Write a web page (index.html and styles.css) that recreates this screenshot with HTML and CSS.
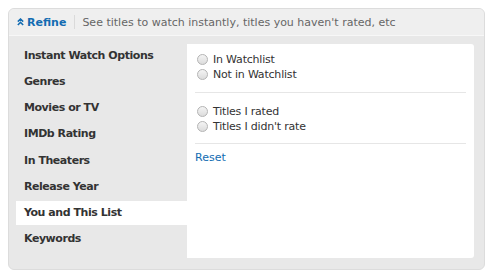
FILE: index.html
```html
<!DOCTYPE html>
<html lang="en">
<head>
    <meta charset="UTF-8">
    <title>Refine</title>
    <link rel="stylesheet" href="styles.css">
</head>
<body>

<div class="refine">
    <div class="refine-head">
        <a class="refine-toggle" href="#">
            <svg class="chev" width="7" height="8" viewBox="0 0 7 8">
                <path d="M0.8 3.6 L3.5 1 L6.2 3.6 M0.8 7 L3.5 4.4 L6.2 7" fill="none" stroke="#136cb2" stroke-width="1.5"/>
            </svg>Refine</a>
        <span class="sep"></span>
        <span class="hint">See titles to watch instantly, titles you haven't rated, etc</span>
    </div>

    <div class="refine-body">
        <ul class="menu">
            <li>Instant Watch Options</li>
            <li>Genres</li>
            <li>Movies or TV</li>
            <li>IMDb Rating</li>
            <li>In Theaters</li>
            <li>Release Year</li>
            <li class="on">You and This List</li>
            <li>Keywords</li>
        </ul>

        <div class="panel">
            <div class="group">
                <label class="opt"><span class="radio"></span>In Watchlist</label>
                <label class="opt"><span class="radio"></span>Not in Watchlist</label>
            </div>
            <div class="group">
                <label class="opt"><span class="radio"></span>Titles I rated</label>
                <label class="opt"><span class="radio"></span>Titles I didn't rate</label>
            </div>
            <a class="reset" href="#">Reset</a>
        </div>
    </div>
</div>

</body>
</html>
```

FILE: styles.css
```css
*{
    margin: 0;
    padding: 0;
}
body{
    background-color: #ffffff;
    font-family: "DejaVu Sans", Verdana, sans-serif;
    font-size: 11px;
    color: #333333;
}
.refine{
    margin: 8px 0 0 8px;
    width: 475px;
    height: 260px;
    border: 1px solid #dcdcdc;
    border-radius: 6px;
    background-color: #e8e8e8;
    overflow: hidden;
}
.refine-head{
    height: 26px;
    display: flex;
    align-items: center;
    background-color: #efefef;
    border-bottom: 1px solid #f7f7f7;
    padding-left: 8px;
}
.refine-toggle{
    display: flex;
    align-items: center;
    color: #136cb2;
    font-weight: bold;
    font-size: 11px;
    text-decoration: none;
}
.chev{
    margin-right: 3px;
}
.sep{
    width: 1px;
    height: 14px;
    background-color: #dadada;
    margin: 0 7px 0 8px;
}
.hint{
    color: #666666;
    font-size: 11px;
}
.refine-body{
    display: flex;
    padding: 8px 10px 0 0;
}
.menu{
    list-style: none;
    width: 171px;
    padding-left: 7px;
}
.menu li{
    height: 24px;
    line-height: 24px;
    padding-left: 8px;
    margin-bottom: 2.15px;
    font-weight: bold;
    font-size: 11px;
    letter-spacing: -0.45px;
    color: #333333;
}
.menu li.on{
    background-color: #ffffff;
}
.panel{
    width: 271px;
    height: 198px;
    background-color: #ffffff;
    border-radius: 0 3px 3px 0;
    padding: 8px 8px 8px 8px;
}
.group{
    padding-bottom: 10px;
    margin-bottom: 7px;
    border-bottom: 1px solid #e6e6e6;
}
.group + .group{
    padding-top: 4px;
    padding-bottom: 9px;
}
.opt{
    display: flex;
    align-items: center;
    height: 15px;
    letter-spacing: -0.2px;
    color: #333333;
}
.radio{
    width: 9px;
    height: 9px;
    border-radius: 50%;
    border: 1px solid #b4b4b4;
    background: linear-gradient(#f4f4f4, #dcdcdc);
    margin: 0 5px 0 2px;
}
.reset{
    display: block;
    color: #136cb2;
    text-decoration: none;
    line-height: 14px;
}
```
